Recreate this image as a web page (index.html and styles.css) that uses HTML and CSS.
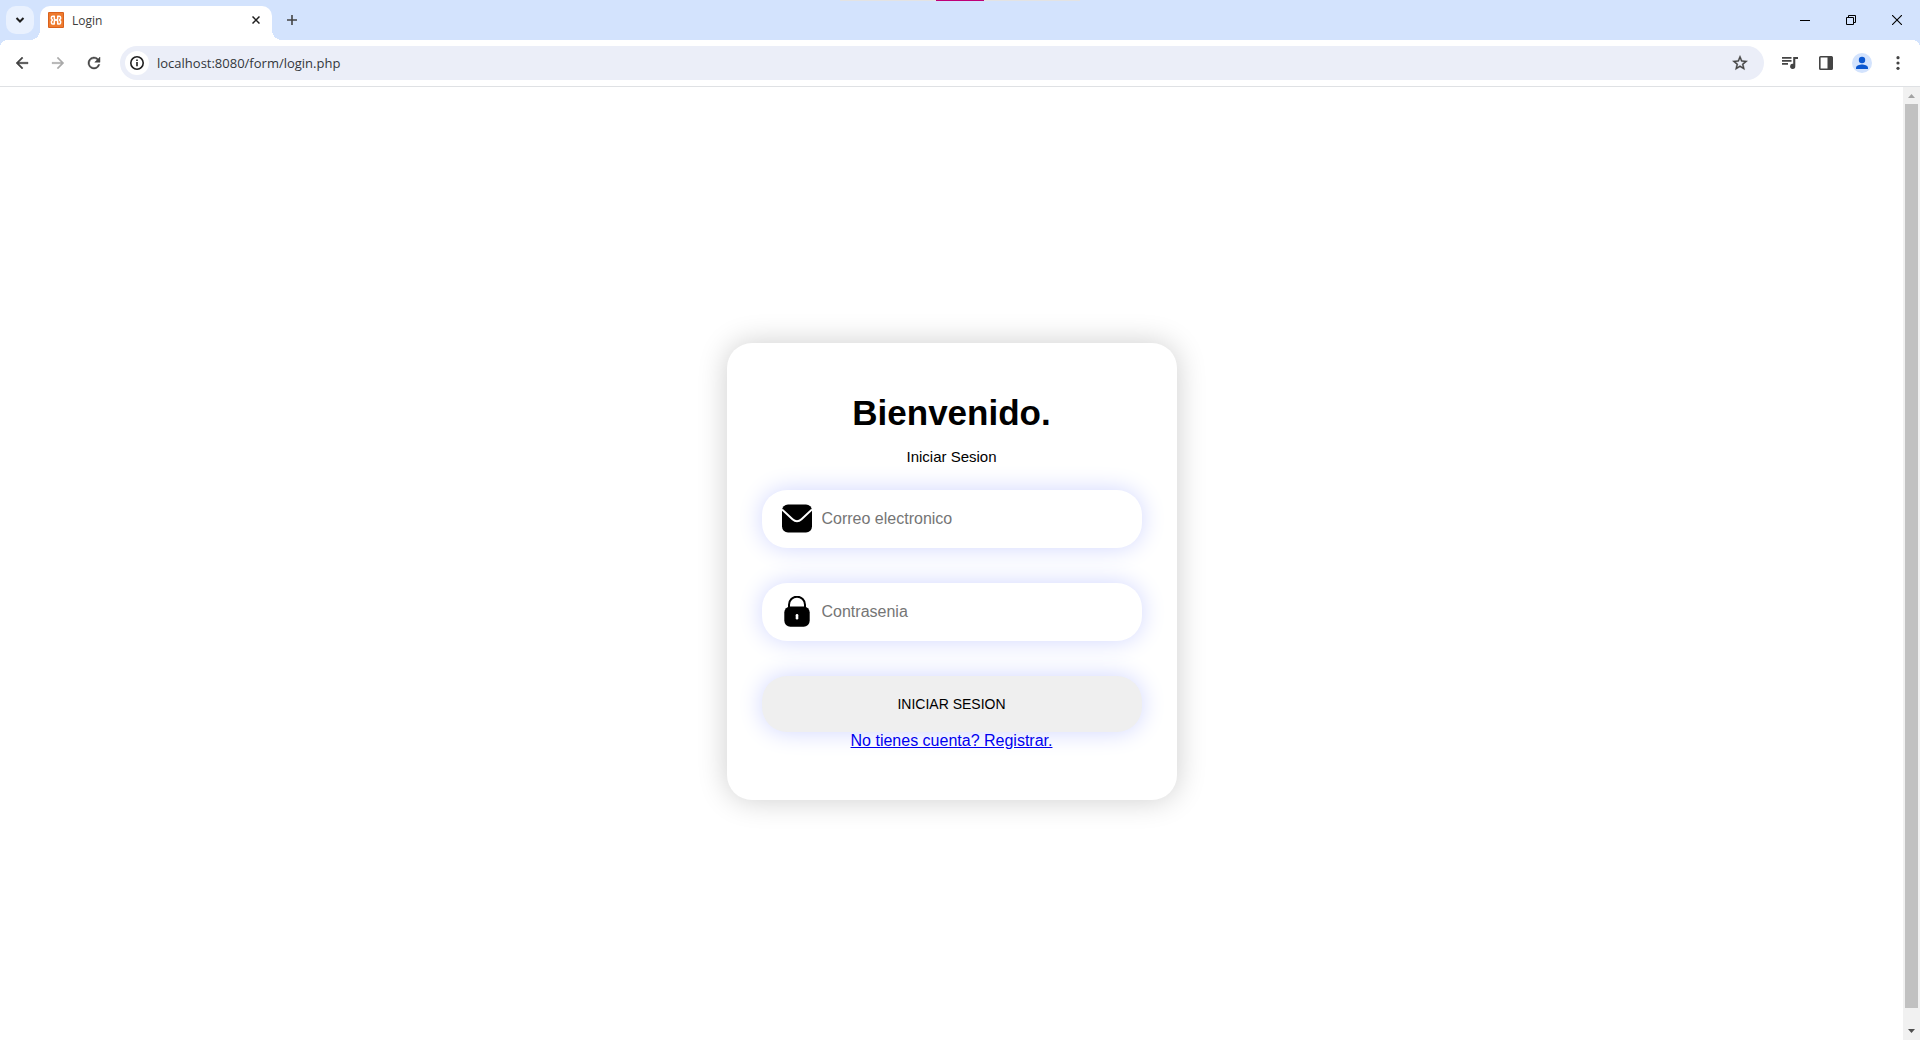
FILE: index.html
```html
<!DOCTYPE html>
<html lang="es">
<head>
<meta charset="utf-8">
<title>Login</title>
<link rel="stylesheet" href="styles.css">
</head>
<body>
<header class="tabstrip">
  <div class="share-bar"></div>
  <button class="tab-search" aria-label="Buscar pestañas"><svg width="10" height="8" viewBox="0 0 10 8"><path d="M1.5 2l3.5 3.5L8.500 2" fill="none" stroke="#1f1f1f" stroke-width="2"/></svg></button>
  <div class="tab">
    <svg width="16" height="16" viewBox="0 0 16 16"><rect width="16" height="16" rx="1" fill="#d9611c"/><rect x="1" y="1" width="14" height="14" fill="#ee7a2e"/><path d="M6.800 4.200H4.700a1.300 1.300 0 0 0-1.300 1.300v1.200L4.600 8 3.400 9.300v1.400A1.300 1.300 0 0 0 4.700 12h2.100M9.200 4.200h2.100a1.300 1.300 0 0 1 1.300 1.300v1.200L11.400 8l1.200 1.300v1.400a1.300 1.300 0 0 1-1.300 1.300H9.200M6.300 4v2.600q0 1.400 1.700 1.400t1.700-1.400V4M6.300 12V9.500Q6.300 8 8 8t1.700 1.500V12" fill="none" stroke="#fff" stroke-width="1.500"/></svg>
    <span class="tab-title">Login</span>
    <button class="tab-close" aria-label="Cerrar pestaña"><svg width="8" height="8" viewBox="0 0 8 8"><path d="M.5.5l7 7M7.500.5l-7 7" stroke="#1f1f1f" stroke-width="1.500"/></svg></button>
  </div>
  <button class="new-tab" aria-label="Nueva pestaña"><svg width="10" height="10" viewBox="0 0 10 10"><path d="M5 0v10M0 5h10" stroke="#444" stroke-width="1.600"/></svg></button>
  <div class="window-controls">
    <button aria-label="Minimizar"><svg width="10" height="10" viewBox="0 0 10 10"><path d="M0 5.500h10" stroke="#000"/></svg></button>
    <button aria-label="Restaurar"><svg width="10" height="10" viewBox="0 0 10 10"><path d="M.5 2.500h7v7h-7zM2.500 2.500v-2h7v7h-2" fill="none" stroke="#000"/></svg></button>
    <button aria-label="Cerrar"><svg width="10" height="10" viewBox="0 0 10 10"><path d="M0 0l10 10M10 0L0 10" stroke="#000" stroke-width="1.100"/></svg></button>
  </div>
</header>
<nav class="toolbar">
  <div class="tools">
    <button aria-label="Atrás"><svg width="18" height="18" viewBox="0 0 24 24" fill="#444"><path d="M20 11H7.800l5.600-5.600L12 4l-8 8 8 8 1.400-1.400L7.800 13H20z" stroke="#444" stroke-width=".6"/></svg></button>
    <button aria-label="Adelante"><svg width="18" height="18" viewBox="0 0 24 24" fill="#aaa"><path d="M4 11h12.200l-5.600-5.600L12 4l8 8-8 8-1.400-1.400 5.600-5.600H4z" stroke="#aaa" stroke-width=".4"/></svg></button>
    <button aria-label="Recargar"><svg width="18" height="18" viewBox="0 0 24 24" fill="#444"><path d="M17.650 6.350A8 8 0 1 0 19.730 14h-2.080A6 6 0 1 1 12 6c1.660 0 3.140.69 4.220 1.780L13 11h7V4z" stroke="#444" stroke-width=".6"/></svg></button>
  </div>
  <div class="omnibox">
    <button class="site-info" aria-label="Información del sitio"><svg width="16" height="16" viewBox="0 0 16 16"><circle cx="8" cy="8" r="6.200" fill="none" stroke="#1f1f1f" stroke-width="1.600"/><path d="M8 7v4.300M8 4.600v1.500" stroke="#1f1f1f" stroke-width="1.600"/></svg></button>
    <input class="url" type="text" value="localhost:8080/form/login.php" aria-label="Dirección">
    <button class="star" aria-label="Añadir a marcadores"><svg width="18" height="18" viewBox="0 0 24 24" fill="#444"><path d="M22 9.240l-7.190-.62L12 2 9.190 8.630 2 9.240l5.460 4.730L5.820 21 12 17.270 18.180 21l-1.630-7.030L22 9.240zM12 15.400l-3.760 2.270 1-4.280-3.320-2.880 4.380-.38L12 6.100l1.710 4.040 4.380.38-3.320 2.880 1 4.280L12 15.400z" stroke="#444" stroke-width=".5"/></svg></button>
  </div>
  <div class="tools">
    <button aria-label="Control de medios"><svg width="16" height="14" viewBox="0 0 16 14" fill="#444"><path d="M0 1h9.500v1.700H0zM0 4h9.500v1.700H0zM0 7h6v1.700H0z"/><path d="M11.200 1H16v2h-2.700v7.300a2.600 2.600 0 1 1-2.100-2.500z"/></svg></button>
    <button aria-label="Panel lateral"><svg width="16" height="16" viewBox="0 0 16 16"><rect x="1.800" y="1.800" width="12.400" height="12.400" rx=".8" fill="none" stroke="#444" stroke-width="1.600"/><path d="M9.500 1.500H14v13H9.500z" fill="#444"/></svg></button>
    <button aria-label="Perfil"><svg width="20" height="20" viewBox="0 0 20 20"><circle cx="10" cy="10" r="10" fill="#d3e3fd"/><circle cx="10" cy="7" r="3.200" fill="#0b57d0"/><path d="M4 16v-1.300c0-2.100 3.800-3.200 6-3.200s6 1.100 6 3.200V16z" fill="#0b57d0"/></svg></button>
    <button aria-label="Menú"><svg width="4" height="14" viewBox="0 0 4 14" fill="#444"><circle cx="2" cy="1.700" r="1.600"/><circle cx="2" cy="7" r="1.600"/><circle cx="2" cy="12.300" r="1.600"/></svg></button>
  </div>
</nav>
<div class="viewport">
  <main class="page">
    <form class="card">
      <h2 class="title">Bienvenido.</h2>
      <p class="subtitle">Iniciar Sesion</p>
      <label class="field">
        <svg width="30" height="30" viewBox="0 0 30 30"><rect y="0.500" width="30" height="28" rx="6"/><path d="M0 5.500l10.500 9.700q4.500 4.200 9 0L30 5.500" fill="none" stroke="#fff" stroke-width="2"/></svg>
        <input type="email" placeholder="Correo electronico" aria-label="Correo electronico">
      </label>
      <label class="field">
        <svg width="30" height="32" viewBox="0 0 30 32"><path d="M7 12V8.700a8 8 0 0 1 16 0V12" fill="none" stroke="#000" stroke-width="2"/><rect x="2.300" y="10.500" width="25.400" height="20.300" rx="6"/><rect x="13.700" y="18" width="2.600" height="5.500" rx="1.200" fill="#fff"/></svg>
        <input type="password" placeholder="Contrasenia" aria-label="Contrasenia">
      </label>
      <button class="submit" type="submit">INICIAR SESION</button>
      <a class="register" href="#">No tienes cuenta? Registrar.</a>
    </form>
  </main>
  <div class="scrollbar">
    <svg width="17" height="17" viewBox="0 0 17 17"><path d="M5 11l3.500-4 3.500 4z" fill="#a3a3a3"/></svg>
    <div class="thumb"></div>
    <svg width="17" height="17" viewBox="0 0 17 17"><path d="M5 6l3.500 4L12 6z" fill="#505050"/></svg>
  </div>
</div>
</body>
</html>
```
FILE: styles.css
```css
* { box-sizing: border-box; }

body {
  margin: 0;
  min-height: 100vh;
  display: flex;
  flex-direction: column;
  background: #fff;
  font-family: "Liberation Sans", Arial, sans-serif;
}

button {
  display: flex;
  align-items: center;
  justify-content: center;
  padding: 0;
  border: 0;
  background: none;
}

input {
  min-width: 0;
  padding: 0;
  border: 0;
  outline: 0;
  background: none;
}

svg { flex: none; }

/* Tab strip */
.tabstrip {
  position: relative;
  display: flex;
  height: 40px;
  padding-left: 6px;
  background: #d3e3fd;
}

.share-bar {
  position: absolute;
  top: 0;
  left: 50%;
  width: 240px;
  height: 1px;
  margin-left: -120px;
  background: linear-gradient(90deg, #e3e3e3 96px, #bf0077 96px, #bf0077 144px, #e3e3e3 144px);
}

.tab-search {
  width: 28px;
  height: 28px;
  margin: 6px 6px 0 0;
  border-radius: 10px;
  background: #e9f1fe;
}

.tab {
  position: relative;
  display: flex;
  align-items: center;
  gap: 8px;
  width: 232px;
  margin-top: 6px;
  padding: 0 8px 6px;
  border-radius: 10px 10px 0 0;
  background: #fff;
}

.tab::before,
.tab::after {
  content: "";
  position: absolute;
  bottom: 0;
  width: 10px;
  height: 10px;
}

.tab::before {
  right: 100%;
  background: radial-gradient(circle at 0 0, transparent 10px, #fff 10px);
}

.tab::after {
  left: 100%;
  background: radial-gradient(circle at 100% 0, transparent 10px, #fff 10px);
}

.tab-title {
  flex: 1;
  padding-top: 2px;
  color: #3c3c3c;
  font: 12px/16px "Open Sans", sans-serif;
}

.tab-close {
  width: 16px;
  height: 16px;
}

.new-tab {
  width: 28px;
  height: 28px;
  margin: 6px 0 0 6px;
}

.window-controls {
  display: flex;
  margin-left: auto;
}

.window-controls button { width: 46px; }

/* Toolbar */
.toolbar {
  display: flex;
  align-items: center;
  gap: 12px;
  height: 47px;
  padding: 0 8px;
  border-bottom: 1px solid #dfe1e4;
  background:
    radial-gradient(circle at 8px 8px, transparent 8px, #d3e3fd 8px) 0 0 / 8px 8px no-repeat,
    radial-gradient(circle at 0 8px, transparent 8px, #d3e3fd 8px) 100% 0 / 8px 8px no-repeat,
    #fff;
}

.tools {
  display: flex;
  gap: 8px;
}

.tools button {
  width: 28px;
  height: 28px;
}

.omnibox {
  flex: 1;
  display: flex;
  align-items: center;
  gap: 8px;
  height: 34px;
  padding: 0 10px 0 5px;
  border-radius: 17px;
  background: #ebeef8;
}

.site-info {
  width: 24px;
  height: 24px;
  border-radius: 50%;
  background: #fff;
}

.url {
  flex: 1;
  color: #33363b;
  font: 13px/20px "Open Sans", sans-serif;
}

.star {
  width: 28px;
  height: 28px;
}

/* Page area */
.viewport {
  flex: 1;
  display: flex;
}

.page {
  flex: 1;
  display: flex;
  align-items: center;
  justify-content: center;
  padding-top: 16px;
}

.card {
  display: flex;
  flex-direction: column;
  align-items: center;
  width: 450px;
  padding: 50px 35px;
  border-radius: 25px;
  box-shadow: 0 0 30px rgba(0, 0, 0, 0.2);
  text-align: center;
}

.title {
  margin: 0;
  font-size: 35px;
  line-height: 40px;
}

.subtitle {
  margin: 14px 0 24px;
  font-size: 15px;
  line-height: 19px;
}

.field,
.submit {
  width: 100%;
  border-radius: 25px;
  box-shadow: 0 0 25px #d0d6ff;
}

.field {
  display: flex;
  align-items: center;
  gap: 10px;
  height: 58px;
  margin-bottom: 35px;
  padding: 0 20px;
  background: #fff;
}

.field input {
  flex: 1;
  height: 32px;
  font: 16px/20px "Liberation Sans", Arial, sans-serif;
}

.field input::placeholder { color: #757575; }

.submit {
  height: 56px;
  background: #efefef;
  color: #000;
  font: 14px/16px "Liberation Sans", Arial, sans-serif;
}

.register {
  color: #00e;
  font-size: 16px;
  line-height: 18px;
}

/* Scroll bar */
.scrollbar {
  display: flex;
  flex-direction: column;
  width: 17px;
  background: #f1f1f1;
}

.thumb {
  flex: 1;
  margin: 0 2px 15px;
  background: #c1c1c1;
}
```
